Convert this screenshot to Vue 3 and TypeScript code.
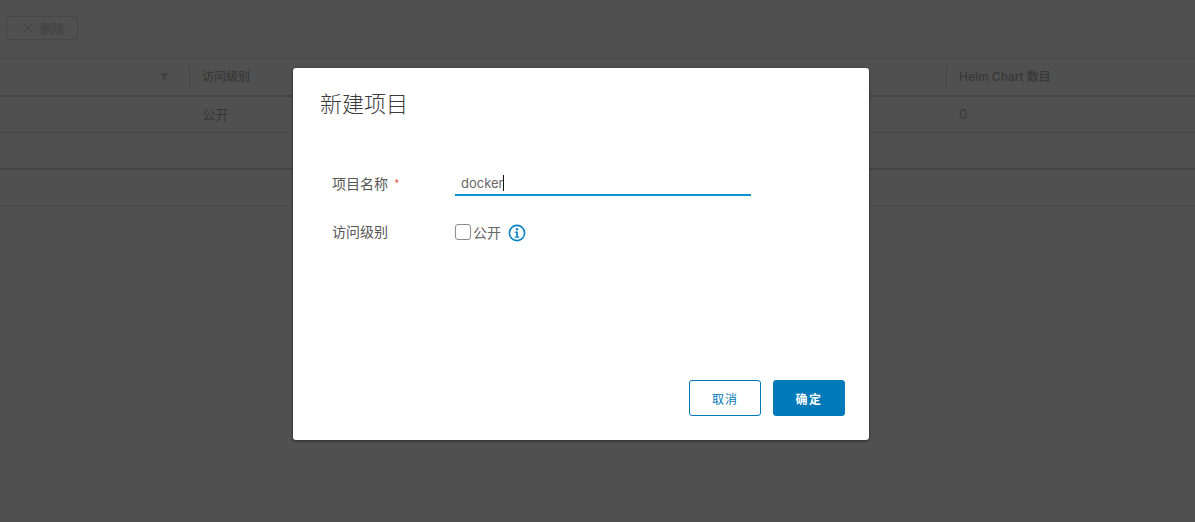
<script setup lang="ts">
const name = 'docker'
</script>

<template>
  <div class="page">
    <div class="toolbar">
      <button class="ghost" type="button">
        <svg class="x" viewBox="0 0 10 10" width="10" height="10"><path d="M1 1l8 8M9 1l-8 8" stroke="#8c8c8c" stroke-width="1" fill="none" /></svg>
        <span>删除</span>
      </button>
    </div>
    <div class="table">
      <div class="row head">
        <div class="cell first">
          <svg class="filter" viewBox="0 0 10 10" width="9" height="9"><path d="M0.5 1.5h9L6 5.5V9H4V5.5z" fill="#8c8c8c" /></svg>
        </div>
        <div class="cell level"><span class="sep"></span>访问级别</div>
        <div class="cell last"><span class="sep"></span>Helm Chart 数目</div>
      </div>
      <div class="row thin body-row">
        <div class="cell first"></div>
        <div class="cell level">公开</div>
        <div class="cell last">0</div>
      </div>
      <div class="row thick"></div>
      <div class="row thin"></div>
    </div>

    <div class="backdrop"></div>

    <div class="modal">
      <h3 class="title">新建项目</h3>
      <form class="form" @submit.prevent>
        <div class="field name-field">
          <label class="label">项目名称<span class="req">*</span></label>
          <div class="input">{{ name }}<i class="caret"></i></div>
        </div>
        <div class="field level-field">
          <label class="label">访问级别</label>
          <div class="check">
            <span class="box"></span>
            <span class="check-text">公开</span>
            <svg class="info" viewBox="0 0 18 18" width="18" height="18">
              <circle cx="9" cy="9" r="7.6" fill="none" stroke="#0a84c6" stroke-width="1.6" />
              <circle cx="9" cy="5.2" r="1.2" fill="#0a84c6" />
              <path d="M6.8 7.6h3.1v5h1.4v1.2H6.7v-1.2h1.5V8.8H6.8z" fill="#0a84c6" />
            </svg>
          </div>
        </div>
      </form>
      <div class="actions">
        <button class="btn outline" type="button">取消</button>
        <button class="btn solid" type="button">确定</button>
      </div>
    </div>
  </div>
</template>

<style>
html, body { margin: 0; padding: 0; background: #fff; }
</style>

<style scoped>
.page {
  position: relative;
  width: 1195px;
  height: 522px;
  overflow: hidden;
  background: #fafafa;
  font-family: Inter, "Noto Sans CJK SC", sans-serif;
  color: #5a5a5a;
}
.toolbar { height: 58px; padding: 16px 0 0 6px; box-sizing: border-box; }
.ghost {
  display: flex;
  align-items: center;
  width: 72px;
  height: 24px;
  padding: 0 0 0 16px;
  box-sizing: border-box;
  gap: 7px;
  border: 1px solid #b8b8b8;
  border-radius: 3px;
  background: transparent;
  font: 12px "Noto Sans CJK SC", sans-serif;
  color: #8c8c8c;
}
.table { border-top: 1px solid #c8c8c8; }
.row { display: flex; box-sizing: border-box; }
.head { height: 38px; padding-bottom: 1px; border-bottom: 2px solid #acacac; font-weight: 500; font-size: 12px; }
.head .level, .head .last { padding-bottom: 2px; }
.thin { height: 36px; border-bottom: 1px solid #c4c4c4; font-size: 13.5px; }
.body-row .cell { padding-bottom: 2px; }
.thick { height: 37px; border-bottom: 2px solid #acacac; }
.cell { position: relative; display: flex; align-items: center; box-sizing: border-box; }
.first { width: 189px; justify-content: flex-end; padding-right: 20px; }
.level { width: 757px; padding-left: 13px; }
.last { flex: 1; padding-left: 13px; }
.sep { position: absolute; left: 0; top: 6px; bottom: 5px; width: 1px; background: #c4c4c4; }

.backdrop { position: absolute; inset: 0; background: rgba(49, 49, 49, 0.85); }

.modal {
  position: absolute;
  left: 293px;
  top: 68px;
  width: 576px;
  height: 372px;
  box-sizing: border-box;
  padding: 0 24px 24px 27px;
  display: flex;
  flex-direction: column;
  background: #fff;
  border-radius: 3px;
  box-shadow: 0 1px 3px rgba(0, 0, 0, 0.5);
}
.title {
  margin: 19px 0 0;
  font: 300 22px/30px "Noto Sans CJK SC", sans-serif;
  color: #3c3c3c;
}
.form { flex: 1; padding: 0 0 0 12px; }
.field { display: flex; align-items: center; }
.name-field { margin-top: 55px; height: 24px; }
.level-field { margin-top: 24px; height: 24px; }
.label {
  width: 123px;
  flex: none;
  padding-bottom: 2px;
  font: 400 14px "Noto Sans CJK SC", sans-serif;
  color: #565656;
}
.req { margin-left: 6px; color: #e0664c; font-size: 12px; }
.input {
  width: 296px;
  height: 24px;
  box-sizing: border-box;
  padding: 2px 0 0 6px;
  border-bottom: 2px solid #0a94d2;
  font-size: 13px;
  line-height: 18px;
  color: #666;
}
.caret { display: inline-block; width: 1px; height: 16px; margin-left: -1px; vertical-align: -3px; background: #111; }
.check { display: flex; align-items: center; }
.box {
  width: 14px;
  height: 14px;
  border: 1px solid #8c8c8c;
  border-radius: 3px;
}
.check-text { margin-left: 2px; font: 400 14px "Noto Sans CJK SC", sans-serif; color: #666; }
.info { margin: 2px 0 0 7px; }
.actions { display: flex; justify-content: flex-end; gap: 12px; }
.btn {
  width: 72px;
  height: 36px;
  padding: 0;
  border: 1px solid #0079b8;
  border-radius: 3px;
  font: 400 12px "Noto Sans CJK SC", sans-serif;
  letter-spacing: 1px;
}
.outline { background: #fff; color: #0079b8; }
.solid { background: #0079b8; color: #fff; font-weight: 700; font-size: 12px; letter-spacing: 1.5px; }
</style>
